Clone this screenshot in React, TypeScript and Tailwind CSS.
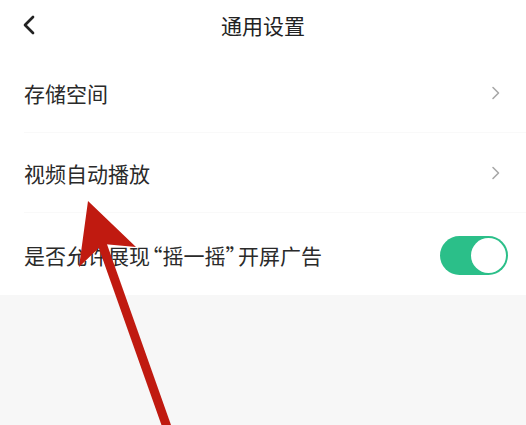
import { ChevronLeft } from 'lucide-react'

const font = { fontFamily: '"Noto Sans CJK SC", "Noto Sans", sans-serif' }

function SmallChevron() {
  return (
    <svg width="10" height="14" viewBox="0 0 10 14" fill="none" className="shrink-0">
      <path d="M2 1.5 L7.5 7 L2 12.5" stroke="#a8a8a8" strokeWidth="1.6" strokeLinecap="round" strokeLinejoin="round" />
    </svg>
  )
}

function Row({ label, children, className = '', divider = true }: { label: React.ReactNode; children: React.ReactNode; className?: string; divider?: boolean }) {
  return (
    <div className={`flex items-center justify-between pl-6 relative ${className}`}>
      <span className="text-[21px] text-[#2a2a2a] leading-none">{label}</span>
      {children}
      {divider && <div className="absolute left-6 right-0 bottom-0 h-px bg-[#f9f9f9]" />}
    </div>
  )
}

export default function App() {
  return (
    <div className="w-[526px] h-[425px] bg-[#f7f7f7] relative overflow-hidden" style={font}>
      <div className="bg-white">
        <div className="h-[53px] flex items-center relative pb-[3px]">
          <ChevronLeft className="w-[32px] h-[32px] text-[#222] ml-[13px] absolute left-0 top-[9px]" strokeWidth={2} />
          <span className="mx-auto text-[21px] text-[#222] leading-none">通用设置</span>
        </div>
        <Row label="存储空间" className="h-[80px]">
          <div className="pr-[25px]">
            <SmallChevron />
          </div>
        </Row>
        <Row label="视频自动播放" className="h-[80px]">
          <div className="pr-[25px]">
            <SmallChevron />
          </div>
        </Row>
        <Row
          className="h-[82px] pt-[2px]"
          divider={false}
          label={
            <>
              是否允许展现
              <span className="inline-block ml-[2px] [font-feature-settings:'halt']">“</span>
              摇一摇
              <span className="inline-block mr-[2px] [font-feature-settings:'halt']">”</span>
              开屏广告
            </>
          }
        >
          <div className="pr-[18px]">
            <div className="w-[68px] h-[39px] rounded-full bg-[#2bbf89] flex items-center justify-end p-[2px]">
              <div className="w-[35px] h-[35px] rounded-full bg-white" />
            </div>
          </div>
        </Row>
      </div>

      {/* red annotation arrow */}
      <svg className="absolute inset-0 pointer-events-none" width="526" height="425" viewBox="0 0 526 425">
        <line x1="100" y1="238" x2="168" y2="430" stroke="#c01a10" strokeWidth="9" />
        <polygon points="88,201 136,247 103,244 79,267" fill="#c01a10" />
      </svg>
    </div>
  )
}
